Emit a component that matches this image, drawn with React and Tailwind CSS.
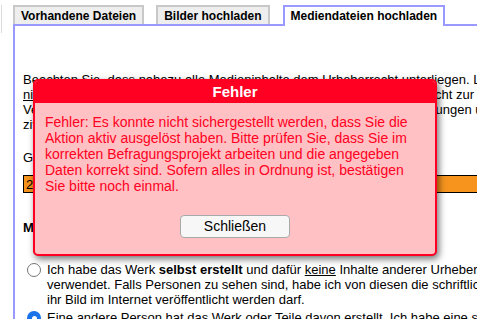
import React from 'react'

const tabs = [
  { label: 'Vorhandene Dateien', active: false, gap: '' },
  { label: 'Bilder hochladen', active: false, gap: 'ml-[12px]' },
  { label: 'Mediendateien hochladen', active: true, gap: 'ml-[13px]' },
]

const Radio = ({ checked }) =>
  checked ? (
    <span className="mt-[1px] flex h-[14px] w-[14px] shrink-0 items-center justify-center rounded-full bg-[#1a73e8]">
      <span className="h-[5px] w-[5px] rounded-full bg-white" />
    </span>
  ) : (
    <span className="mt-[1px] h-[14px] w-[14px] shrink-0 rounded-full border border-[#767676] bg-white" />
  )

// Error dialog
const ErrorDialog = () => (
  <div className="absolute left-[33px] top-[79px] z-20 w-[404px] overflow-hidden rounded-[5px] border-2 border-[#ff0022] bg-[#ffc1c3] shadow-[2px_3px_7px_rgba(0,0,0,0.55)]">
    <div className="flex h-[22px] items-center justify-center bg-[#ff0022] text-[15px] font-bold text-white">
      Fehler
    </div>
    <div className="pl-[10px] pr-[14px] pt-[11px] text-[14px] leading-[16px] text-[#ff0022]">
      Fehler: Es konnte nicht sichergestellt werden, dass Sie die Aktion aktiv ausgelöst haben. Bitte prüfen Sie,
      dass Sie im korrekten Befragungsprojekt arbeiten und die angegeben Daten korrekt sind. Sofern alles in
      Ordnung ist, bestätigen Sie bitte noch einmal.
    </div>
    <div className="flex justify-center pb-[16px] pt-[21px]">
      <button className="h-[23px] w-[110px] rounded-[4px] border border-[#a9a9a9] bg-[#f7f7f7] text-[14px] text-black">
        Schließen
      </button>
    </div>
  </div>
)

export default function App() {
  return (
    <div
      className="relative h-[319px] w-[477px] overflow-hidden bg-white text-black"
      style={{ fontFamily: '"Liberation Sans", Arial, sans-serif' }}
    >
      <div className="absolute left-[1px] top-[5px] h-[28px] w-px bg-[#dcdcdc]" />

      {/* Tabs */}
      <div className="flex items-end pl-[13px] pt-[5px]">
        {tabs.map((tab) => (
          <div
            key={tab.label}
            className={`${tab.gap} flex items-center whitespace-nowrap border-2 border-b-0 px-[6px] text-[12px] font-bold ${
              tab.active
                ? 'relative z-10 -mb-[2px] h-[21px] border-[#9999ff] bg-white pb-[2px]'
                : 'h-[19px] border-[#c8c8c8] bg-[#eeeeee]'
            }`}
          >
            {tab.label}
          </div>
        ))}
      </div>

      {/* Panel */}
      <div className="ml-[13px] h-[400px] w-[600px] border-l-2 border-t-2 border-[#9999ff] pl-[8px] pt-[46px] text-[13px] leading-[15px]">
        <div className="whitespace-nowrap">
          <div>Beachten Sie, dass nahezu alle Medieninhalte dem Urheberrecht unterliegen. Laden Sie</div>
          <div>
            <span className="underline">nicht</span> ohne Erlaubnis Inhalte anderer Urheber hoch – Sie haben kein Recht zur Veröffentlichung
          </div>
          <div>Veröffentlichungen ohne eine Genehmigung können schnell zu Abmahnungen und Schadensersatz</div>
          <div>zivilrechtliche Folgen nach sich ziehen.</div>
        </div>

        <div className="mt-[18px]">Geben Sie einen Titel für die Mediendatei ein:</div>
        <div className="mt-[10px] flex h-[18px] items-center border border-black bg-[#f7941e] pl-[2px] text-[13px]">
          2
        </div>

        <div className="mt-[27px] font-bold">Medienrechte und Urheberschaft</div>

        <div className="mt-[27px] flex gap-[6px] pl-[4px]">
          <Radio checked={false} />
          <div className="whitespace-nowrap">
            <div>
              Ich habe das Werk <b>selbst erstellt</b> und dafür <span className="underline">keine</span> Inhalte anderer Urheber
            </div>
            <div>verwendet. Falls Personen zu sehen sind, habe ich von diesen die schriftliche Erlaubnis, dass</div>
            <div>ihr Bild im Internet veröffentlicht werden darf.</div>
          </div>
        </div>
        <div className="mt-[3px] flex gap-[6px] pl-[4px]">
          <Radio checked />
          <div className="whitespace-nowrap">
            Eine andere Person hat das Werk oder Teile davon erstellt. Ich habe eine schriftliche Genehmigung.
          </div>
        </div>
      </div>

      <ErrorDialog />
    </div>
  )
}
